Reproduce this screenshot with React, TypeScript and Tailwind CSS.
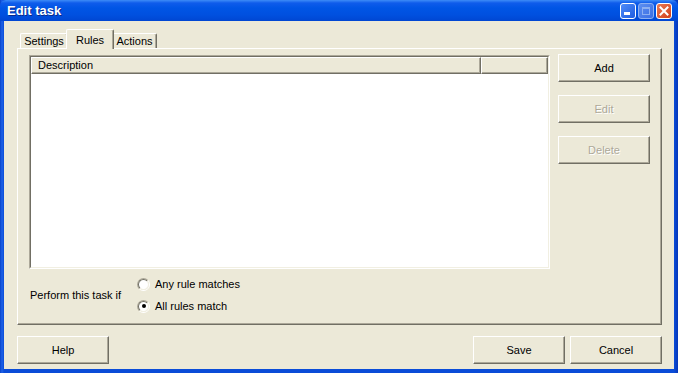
const FONT = "font-['Liberation_Sans',Arial,sans-serif]";

function Button({ label, disabled }: { label: string; disabled?: boolean }) {
  return (
    <div className="flex h-[28px] w-[92px] items-center justify-center border border-t-white border-l-white border-r-[#716F64] border-b-[#716F64] bg-[#ECE9D8] shadow-[inset_-1px_-1px_0_#ACA899]">
      <span
        className={
          disabled
            ? "text-[11px] text-[#ACA899] [text-shadow:1px_1px_0_#ffffff]"
            : "text-[11px] text-black"
        }
      >
        {label}
      </span>
    </div>
  );
}

function Radio({ label, checked }: { label: string; checked?: boolean }) {
  return (
    <div className="flex h-[22px] items-center gap-[5px]">
      <div className="flex h-[13px] w-[13px] items-center justify-center rounded-full border border-t-[#ACA899] border-l-[#ACA899] border-r-white border-b-white">
        <div className="flex h-[11px] w-[11px] items-center justify-center rounded-full border border-t-[#716F64] border-l-[#716F64] border-r-[#F1EFE2] border-b-[#F1EFE2] bg-white">
          {checked && <div className="h-[4px] w-[4px] rounded-full bg-black" />}
        </div>
      </div>
      <span className="text-[11px] text-black">{label}</span>
    </div>
  );
}

function Tab({ label, active, width }: { label: string; active?: boolean; width: string }) {
  if (active) {
    return (
      <div
        className={`relative z-10 -mx-[2px] -mb-px flex h-[20px] ${width} items-start justify-center rounded-t-[2px] border border-b-0 border-t-white border-l-white border-r-[#716F64] bg-[#ECE9D8] pt-[2px] shadow-[inset_-1px_0_0_#ACA899]`}
      >
        <span className="text-[11px] text-black">{label}</span>
      </div>
    );
  }
  return (
    <div
      className={`flex h-[15px] ${width} items-center justify-center rounded-t-[2px] border border-b-0 border-t-white border-l-white border-r-[#716F64] bg-[#ECE9D8] shadow-[inset_-1px_0_0_#ACA899]`}
    >
      <span className="text-[11px] text-black">{label}</span>
    </div>
  );
}

export default function App() {
  return (
    <div
      className={`${FONT} flex h-[373px] w-[678px] flex-col bg-[linear-gradient(90deg,#0842C9_0px,#1E62E8_2px,#0A4CD8_4px,#0A4CD8_674px,#0636B8_678px)]`}
    >
      {/* title bar */}
      <div className="flex h-[21px] items-center rounded-t-[6px] bg-[linear-gradient(180deg,#3D8CF7_0px,#0F5CEB_3px,#0055E5_8px,#0050DF_15px,#0046D2_21px)] pl-[7px] pr-[6px]">
        <span className="text-[13px] font-bold text-white [text-shadow:1px_1px_0_#0A2A8A]">Edit task</span>
        <div className="ml-auto flex gap-[2px]">
          <div className="relative h-[16px] w-[16px] rounded-[3px] border border-white bg-[linear-gradient(135deg,#4F8CF8,#1E5CE0)]">
            <div className="absolute bottom-[3px] left-[3px] h-[3px] w-[6px] bg-white" />
          </div>
          <div className="relative h-[16px] w-[16px] rounded-[3px] border border-[#8DB0F2] bg-[linear-gradient(135deg,#5C8FF0,#3B6EE4)]">
            <div className="absolute left-[3px] top-[3px] h-[8px] w-[8px] border border-t-[2px] border-[#8DB0F2]" />
          </div>
          <div className="flex h-[16px] w-[16px] items-center justify-center rounded-[3px] border border-white bg-[linear-gradient(135deg,#EA7A55,#D2401A)]">
            <svg viewBox="0 0 10 10" className="h-[10px] w-[10px]">
              <path d="M1.5 1.5 L8.5 8.5 M8.5 1.5 L1.5 8.5" stroke="white" strokeWidth="2" strokeLinecap="square" />
            </svg>
          </div>
        </div>
      </div>

      {/* body */}
      <div className="mx-[4px] flex h-[348px] flex-col bg-[#ECE9D8] pl-[13px] pr-[12px] pt-[8px]">
        <div className="flex h-[19px] items-end pl-[3px]">
          <Tab label="Settings" width="w-[48px]" />
          <Tab label="Rules" width="w-[48px]" active />
          <Tab label="Actions" width="w-[45px]" />
        </div>

        <div className="flex h-[277px] flex-col border border-t-white border-l-white border-r-[#716F64] border-b-[#716F64] shadow-[inset_-1px_-1px_0_#ACA899] pl-[11px] pt-[6px]">
          <div className="flex gap-[8px]">
            {/* list view */}
            <div className="flex h-[214px] w-[521px] flex-col border border-t-[#ACA899] border-l-[#ACA899] border-r-white border-b-white">
              <div className="flex h-full flex-col border border-t-[#716F64] border-l-[#716F64] border-r-[#F1EFE2] border-b-[#F1EFE2] bg-white">
                <div className="flex h-[17px]">
                  <div className="flex w-[450px] items-center border border-t-white border-l-white border-r-[#716F64] border-b-[#716F64] bg-[#ECE9D8] pl-[6px] shadow-[inset_-1px_-1px_0_#ACA899]">
                    <span className="text-[11px] text-black">Description</span>
                  </div>
                  <div className="flex-1 border border-t-white border-l-white border-r-[#716F64] border-b-[#716F64] bg-[#ECE9D8] shadow-[inset_-1px_-1px_0_#ACA899]" />
                </div>
              </div>
            </div>

            <div className="-mt-px flex flex-col gap-[13px]">
              <Button label="Add" />
              <Button label="Edit" disabled />
              <Button label="Delete" disabled />
            </div>
          </div>

          <div className="mt-[4px] flex items-center">
            <span className="w-[108px] pl-px text-[11px] text-black">Perform this task if</span>
            <div className="flex flex-col">
              <Radio label="Any rule matches" />
              <Radio label="All rules match" checked />
            </div>
          </div>
        </div>

        <div className="mt-[11px] flex">
          <Button label="Help" />
          <div className="ml-auto flex gap-[5px]">
            <Button label="Save" />
            <Button label="Cancel" />
          </div>
        </div>
      </div>
    </div>
  );
}
